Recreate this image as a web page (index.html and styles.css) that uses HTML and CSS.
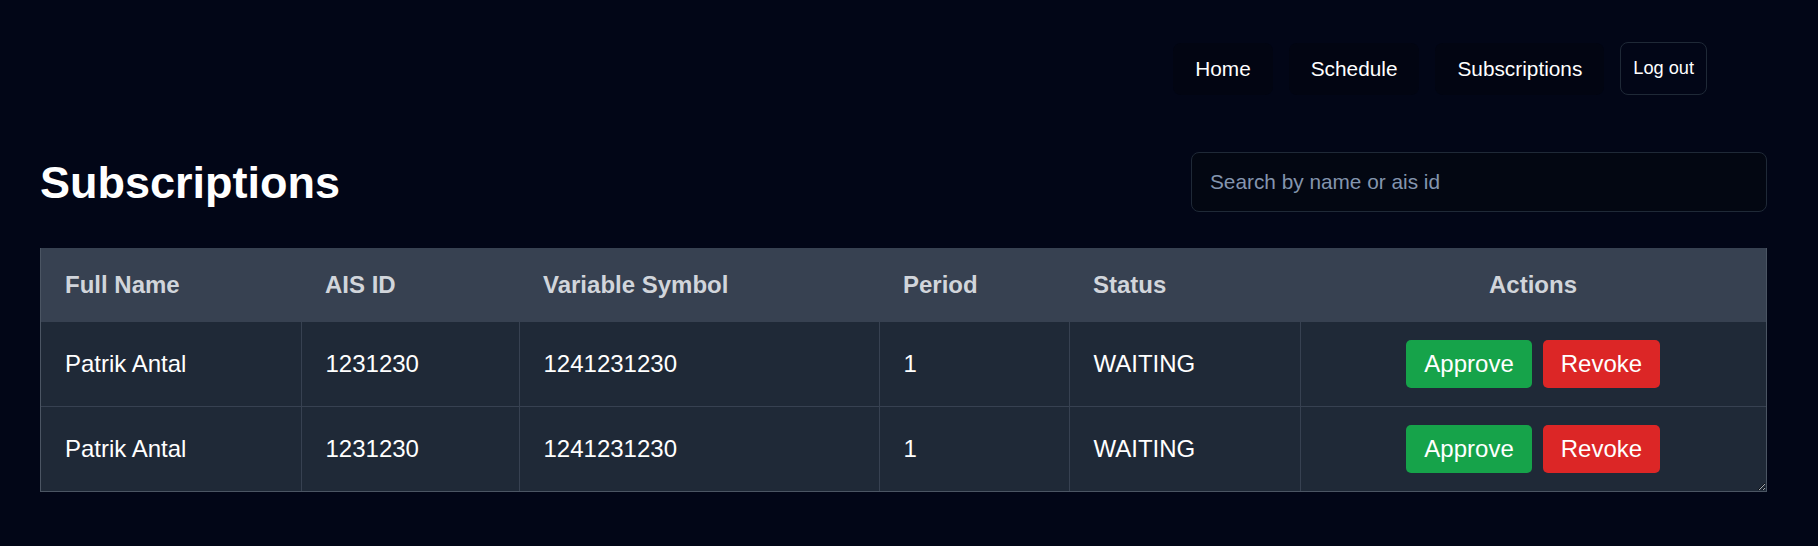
FILE: index.html
```html
<!DOCTYPE html>
<html lang="en">
<head>
<meta charset="utf-8">
<title>Subscriptions</title>
<link rel="stylesheet" href="styles.css">
</head>
<body>
<header class="topbar">
  <nav class="nav">
    <a class="nav-link" href="#">Home</a>
    <a class="nav-link" href="#">Schedule</a>
    <a class="nav-link" href="#">Subscriptions</a>
    <button class="logout" type="button">Log out</button>
  </nav>
</header>
<main class="page">
  <div class="page-head">
    <h1 class="title">Subscriptions</h1>
    <input class="search" type="text" placeholder="Search by name or ais id">
  </div>
  <div class="table-wrap">
    <table class="subs">
      <colgroup>
        <col class="c1"><col class="c2"><col class="c3"><col class="c4"><col class="c5"><col class="c6">
      </colgroup>
      <thead>
        <tr>
          <th>Full Name</th>
          <th>AIS ID</th>
          <th>Variable Symbol</th>
          <th>Period</th>
          <th>Status</th>
          <th class="center">Actions</th>
        </tr>
      </thead>
      <tbody>
        <tr>
          <td>Patrik Antal</td>
          <td>1231230</td>
          <td>1241231230</td>
          <td>1</td>
          <td>WAITING</td>
          <td class="actions"><div class="btns"><button class="btn approve" type="button">Approve</button><button class="btn revoke" type="button">Revoke</button></div></td>
        </tr>
        <tr>
          <td>Patrik Antal</td>
          <td>1231230</td>
          <td>1241231230</td>
          <td>1</td>
          <td>WAITING</td>
          <td class="actions"><div class="btns"><button class="btn approve" type="button">Approve</button><button class="btn revoke" type="button">Revoke</button></div></td>
        </tr>
      </tbody>
    </table>
  </div>
</main>
</body>
</html>
```

FILE: styles.css
```css
* { box-sizing: border-box; }

html, body {
  margin: 0;
  padding: 0;
  background: #020617;
  color: #ffffff;
  font-family: "Liberation Sans", Arial, sans-serif;
}

.topbar {
  padding: 42px 111px 0 0;
  display: flex;
  justify-content: flex-end;
}

.nav {
  display: flex;
  align-items: center;
  gap: 16px;
}

.nav-link {
  display: flex;
  align-items: center;
  height: 52px;
  padding: 0 22px;
  background: #020512;
  border-radius: 8px;
  color: #ffffff;
  text-decoration: none;
  font-size: 20.8px;
}

.logout {
  height: 53px;
  padding: 0 12px;
  background: #020617;
  border: 1px solid #1f2937;
  border-radius: 8px;
  color: #ffffff;
  font-family: "Liberation Sans", Arial, sans-serif;
  font-size: 18.2px;
}

.page {
  padding: 0 51px 0 40px;
}

.page-head {
  margin-top: 57px;
  display: flex;
  align-items: center;
  justify-content: space-between;
}

.title {
  margin: 0;
  font-size: 45px;
  font-weight: 700;
  line-height: 1;
}

.search {
  width: 576px;
  height: 60px;
  padding: 0 18px;
  background: #030712;
  border: 1px solid #1f2937;
  border-radius: 8px;
  color: #ffffff;
  font-family: "Liberation Sans", Arial, sans-serif;
  font-size: 20.8px;
  outline: none;
}

.search::placeholder {
  color: #8495ae;
}

.table-wrap {
  margin-top: 36px;
  border: 1px solid #4b5563;
  border-top: none;
  overflow: auto;
  resize: both;
}

.subs {
  width: 100%;
  border-collapse: collapse;
  table-layout: fixed;
}

.c1 { width: 260px; }
.c2 { width: 218px; }
.c3 { width: 360px; }
.c4 { width: 190px; }
.c5 { width: 231px; }

.subs th {
  background: #374151;
  color: #d1d5db;
  font-size: 24px;
  font-weight: 700;
  text-align: left;
  padding: 18px 24px;
  line-height: 38px;
}

.subs th.center { text-align: center; }

.subs td {
  background: #1f2937;
  font-size: 24px;
  line-height: 36px;
  padding: 24px 24px;
  border: 1px solid #374151;
  border-top: none;
  color: #ffffff;
}

.subs tr td:first-child { border-left: none; }
.subs tr td:last-child { border-right: none; }
.subs tbody tr:last-child td { border-bottom: none; }

.subs td.actions {
  padding: 0 24px;
}

.btns {
  display: flex;
  justify-content: center;
  gap: 11px;
}

.btn {
  height: 48px;
  padding: 0 18px;
  border: none;
  border-radius: 5px;
  color: #ffffff;
  font-family: "Liberation Sans", Arial, sans-serif;
  font-size: 24px;
}

.approve { background: #16a34a; }
.revoke { background: #dc2626; }
```
